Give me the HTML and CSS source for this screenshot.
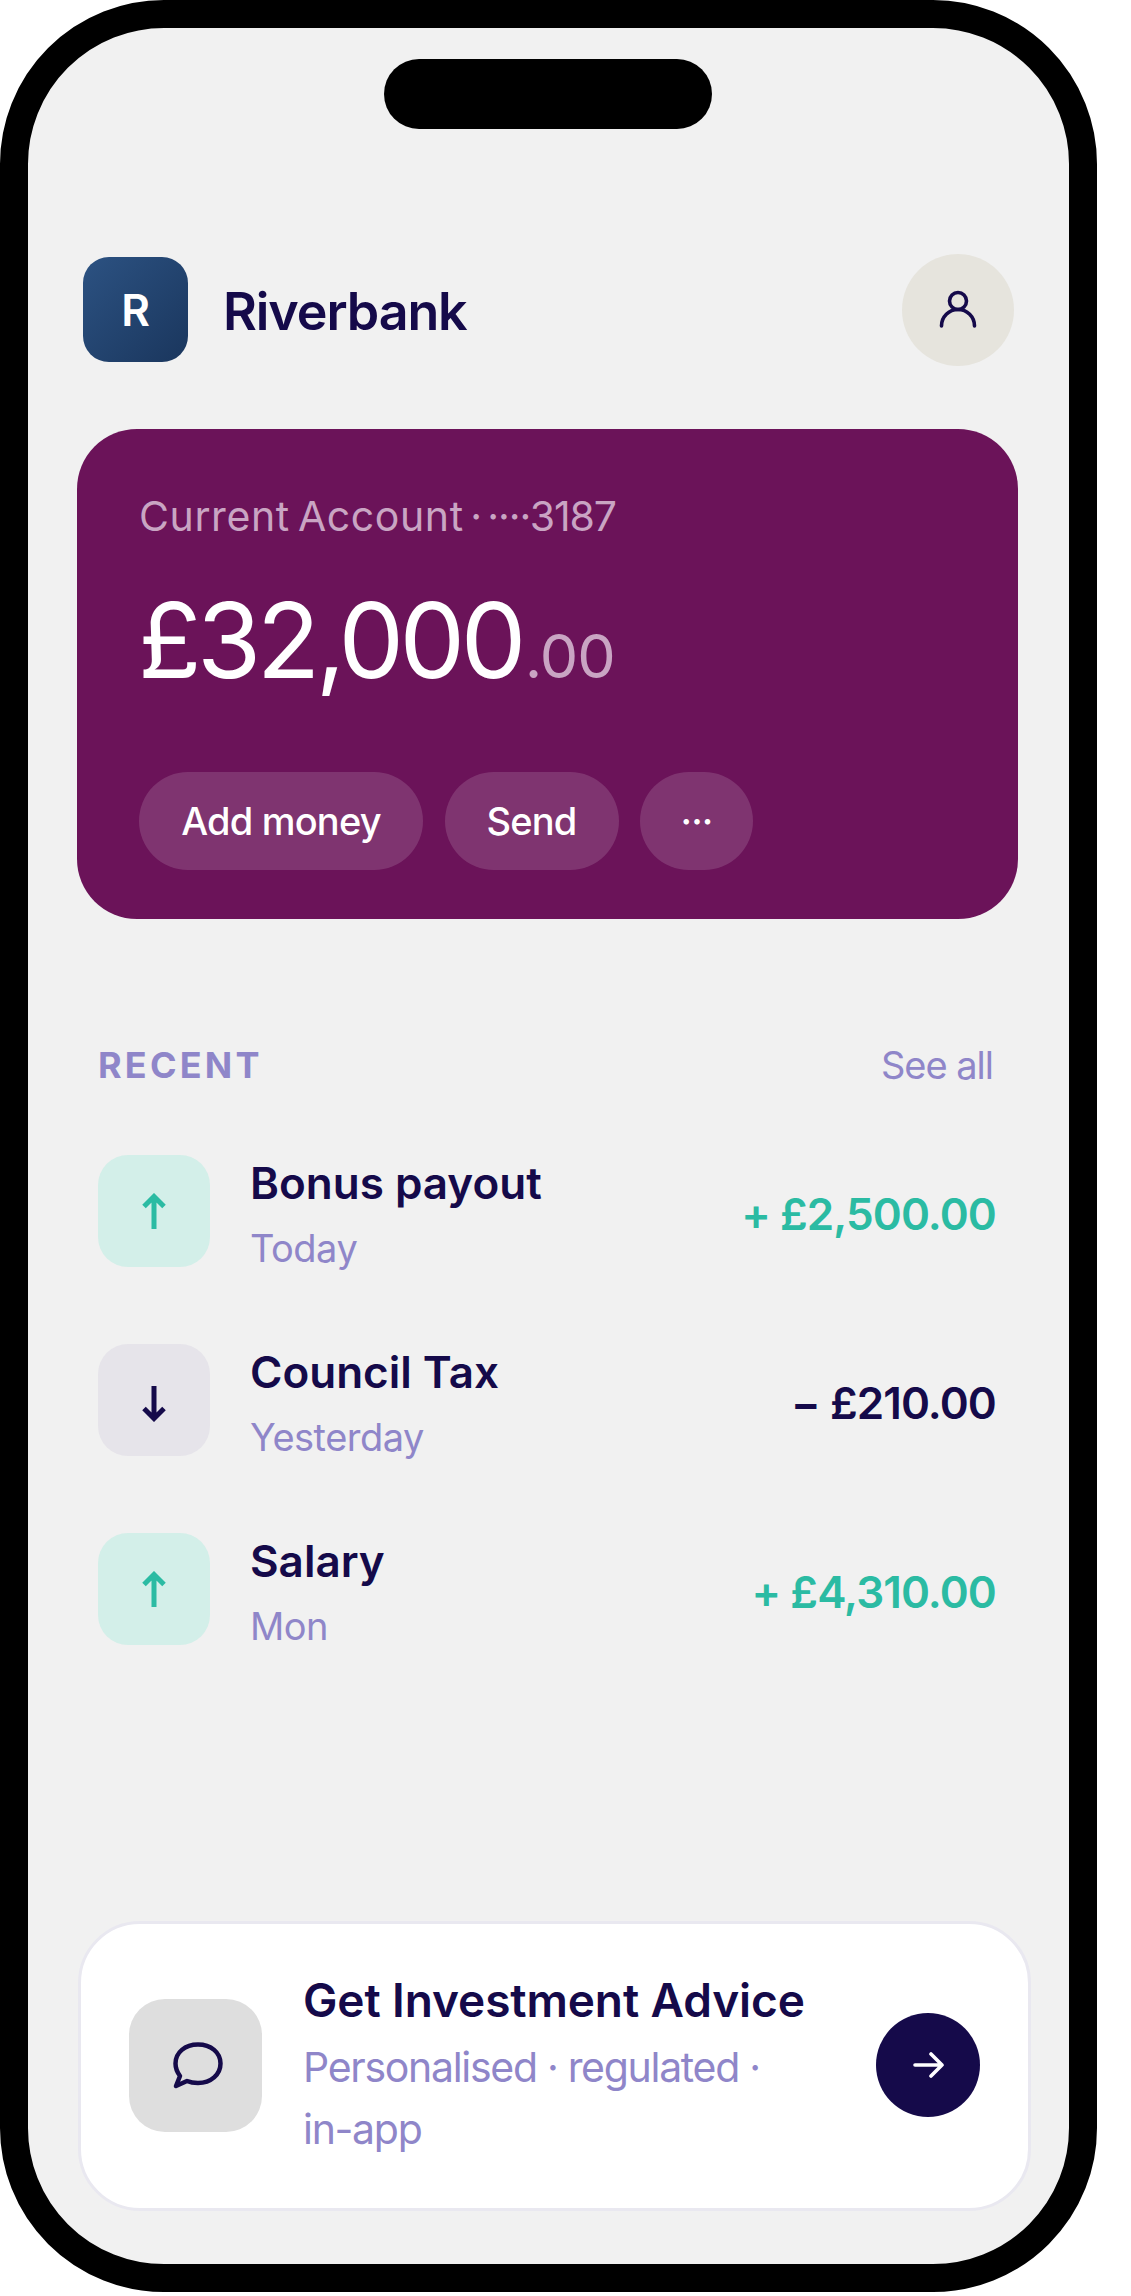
FILE: index.html
```html
<!DOCTYPE html>
<html lang="en">
<head>
  <meta charset="UTF-8">
  <meta name="viewport" content="width=device-width, initial-scale=1.0">
  <title>Riverbank</title>
  <link rel="stylesheet" href="styles.css">
</head>
<body>
  <div class="phone">
    <div class="notch"></div>
    <div class="screen">
      <header class="top">
        <div class="brand">
          <div class="logo">R</div>
          <span class="brand-name">Riverbank</span>
        </div>
        <div class="avatar">
          <svg class="icon-user" width="40" height="40" viewBox="0 0 40 40" fill="none" stroke="#150a4a" stroke-width="3.6" stroke-linecap="round">
            <circle cx="20" cy="11" r="8.5"/>
            <path d="M3.500 36a16.500 16.500 0 0 1 33 0"/>
          </svg>
        </div>
      </header>

      <section class="card">
        <div class="card-label"><span class="acct">Current Account</span> · ····3187</div>
        <div class="card-balance">£32,000<span class="pence">.00</span></div>
        <div class="card-actions">
          <button class="pill pill-add">Add money</button>
          <button class="pill pill-send">Send</button>
          <button class="pill pill-more">···</button>
        </div>
      </section>

      <section class="recent">
        <div class="recent-head">
          <span class="recent-title">RECENT</span>
          <span class="see-all">See all</span>
        </div>

        <div class="row">
          <div class="row-icon in">
            <svg width="24" height="36" viewBox="0 0 24 36" fill="none" stroke="#2bbba3" stroke-width="5"><path d="M12 36V3M2 13.500L12 3.500l10 10"/></svg>
          </div>
          <div class="row-text">
            <div class="row-name">Bonus payout</div>
            <div class="row-when">Today</div>
          </div>
          <div class="row-amount plus">+ £2,500.00</div>
        </div>

        <div class="row">
          <div class="row-icon out">
            <svg class="arrow-down" width="24" height="36" viewBox="0 0 24 36" fill="none" stroke="#150a4a" stroke-width="5"><path d="M12 0v33M2 22.500l10 10 10-10"/></svg>
          </div>
          <div class="row-text">
            <div class="row-name">Council Tax</div>
            <div class="row-when">Yesterday</div>
          </div>
          <div class="row-amount">− £210.00</div>
        </div>

        <div class="row">
          <div class="row-icon in">
            <svg width="24" height="36" viewBox="0 0 24 36" fill="none" stroke="#2bbba3" stroke-width="5"><path d="M12 36V3M2 13.500L12 3.500l10 10"/></svg>
          </div>
          <div class="row-text">
            <div class="row-name">Salary</div>
            <div class="row-when">Mon</div>
          </div>
          <div class="row-amount plus">+ £4,310.00</div>
        </div>
      </section>

      <section class="advice">
        <div class="advice-icon">
          <svg width="70" height="70" viewBox="0 0 70 70" fill="none" stroke="#150a4a" stroke-width="4.5" stroke-linejoin="round">
            <path d="M19 46C16 42 14.500 38 14.500 33.500C14.500 22.500 24 14.500 37 14.500C50 14.500 59.500 22.500 59.500 33.500C59.500 44.500 50 53 37 53C33 53 29 52.300 26 51L15 56Z"/>
          </svg>
        </div>
        <div class="advice-text">
          <div class="advice-title">Get Investment Advice</div>
          <div class="advice-sub">Personalised · regulated · <span class="nowrap">in-app</span></div>
        </div>
        <div class="advice-go">
          <svg width="31" height="28" viewBox="0 0 31 28" fill="none" stroke="#fff" stroke-width="3.6" stroke-linecap="round" stroke-linejoin="round"><path d="M2 14h27M18 3l11 11-11 11"/></svg>
        </div>
      </section>
    </div>
  </div>
</body>
</html>
```

FILE: styles.css
```css
body {
  margin: 0;
  background-color: #fff;
  font-family: Inter, "Noto Sans", sans-serif;
  color: #150a4a;
}
.phone {
  position: relative;
  box-sizing: border-box;
  width: 1097px;
  height: 2292px;
  border: 28px solid #000;
  border-radius: 164px;
  background-color: #f1f1f1;
}
.notch {
  position: absolute;
  top: 31px;
  left: 356px;
  width: 328px;
  height: 70px;
  border-radius: 35px;
  background-color: #000;
}
.screen {
  display: flex;
  flex-direction: column;
  height: 100%;
}

/* header */
.top {
  display: flex;
  align-items: center;
  justify-content: space-between;
  height: 112px;
  margin: 226px 55px 0;
}
.brand {
  display: flex;
  align-items: center;
  gap: 35px;
}
.logo {
  display: flex;
  align-items: center;
  justify-content: center;
  width: 105px;
  height: 105px;
  margin-bottom: 1px;
  border-radius: 26px;
  background: linear-gradient(135deg, #2c5282, #1a365d);
  color: #fff;
  font-size: 44px;
  font-weight: 600;
}
.brand-name {
  padding-top: 3px;
  font-size: 52px;
  font-weight: 600;
  letter-spacing: -1.1px;
}
.avatar {
  display: flex;
  align-items: center;
  justify-content: center;
  width: 112px;
  height: 112px;
  border-radius: 50%;
  background-color: #e6e4dd;
}

/* balance card */
.card {
  box-sizing: border-box;
  width: 941px;
  height: 490px;
  margin: 63px 0 0 49px;
  padding: 62px 62px 49px;
  border-radius: 60px;
  background-color: #6b1359;
  color: #fff;
}
.card-label {
  font-size: 41px;
  line-height: 50px;
  color: #c9a5c3;
  letter-spacing: -1.1px;
  word-spacing: -4px;
}
.acct {
  letter-spacing: 0.6px;
}
.card-balance {
  margin: 34px 0 0 -1px;
  font-size: 104px;
  font-weight: 400;
  line-height: 130px;
  letter-spacing: -4.500px;
}
.pence {
  margin-left: 3px;
  font-size: 61px;
  letter-spacing: -1px;
  color: #c9a5c3;
}
.card-actions {
  display: flex;
  gap: 21.5px;
  margin-top: 51px;
}
.pill {
  height: 98px;
  padding: 0;
  border: none;
  border-radius: 49px;
  background-color: rgba(255, 255, 255, 0.14);
  color: #fff;
  font-family: inherit;
  font-size: 38px;
  font-weight: 500;
  letter-spacing: -0.8px;
}
.pill-add { width: 284px; }
.pill-send { width: 174px; }
.pill-more { width: 113px; }

/* recent list */
.recent {
  margin: 122px 73px 0 70px;
}
.recent-head {
  display: flex;
  align-items: center;
  justify-content: space-between;
  height: 48px;
  padding-right: 3px;
}
.recent-title {
  font-size: 36px;
  font-weight: 700;
  letter-spacing: 3.2px;
  color: #8f86c9;
}
.see-all {
  font-size: 38px;
  color: #8f86c9;
  letter-spacing: -1px;
}
.row {
  display: flex;
  align-items: center;
  height: 112px;
  margin-top: 77px;
}
.recent-head + .row {
  margin-top: 66px;
}
.row-icon {
  display: flex;
  align-items: center;
  justify-content: center;
  flex-shrink: 0;
  width: 112px;
  height: 112px;
  border-radius: 30px;
}
.row-icon.in {
  background-color: #d3efe9;
}
.row-icon.out {
  background-color: #e6e4ea;
}
.arrow-down {
  margin-top: 7px;
}
.row-text {
  flex: 1;
  margin-left: 40px;
  padding-top: 5px;
}
.row-name {
  font-size: 44px;
  font-weight: 600;
  line-height: 56px;
}
.row-when {
  margin-top: 13px;
  font-size: 38px;
  line-height: 48px;
  color: #8f86c9;
  letter-spacing: -0.5px;
}
.row-amount {
  padding-top: 5px;
  font-size: 44px;
  font-weight: 600;
  letter-spacing: -0.9px;
}
.row-amount.plus {
  color: #2bbba3;
}

/* advice banner */
.advice {
  box-sizing: border-box;
  display: flex;
  align-items: center;
  width: 953px;
  height: 290px;
  margin: auto 0 53px 50px;
  padding: 0 48px 2px;
  border: 3px solid #e9e8f0;
  border-radius: 62px;
  background-color: #fff;
}
.advice-icon {
  display: flex;
  align-items: center;
  justify-content: center;
  flex-shrink: 0;
  width: 133px;
  height: 133px;
  border-radius: 36px;
  background-color: #dedede;
}
.advice-text {
  flex: 1;
  margin: 0 36px 0 41px;
}
.advice-title {
  font-size: 46px;
  font-weight: 600;
  line-height: 60px;
  letter-spacing: -0.1px;
}
.advice-sub {
  margin-top: 6px;
  font-size: 41px;
  line-height: 62px;
  color: #8f86c9;
  letter-spacing: -1.3px;
}
.nowrap {
  white-space: nowrap;
}
.advice-go {
  display: flex;
  align-items: center;
  justify-content: center;
  flex-shrink: 0;
  width: 104px;
  height: 104px;
  border-radius: 50%;
  background-color: #150a4a;
}
```
